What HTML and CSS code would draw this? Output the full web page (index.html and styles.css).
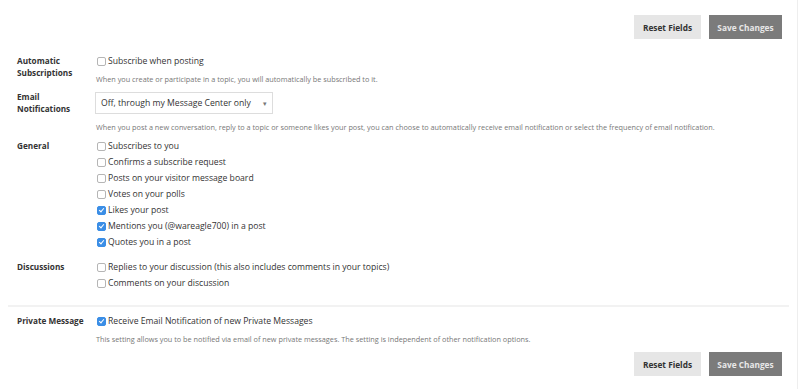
FILE: index.html
```html
<!DOCTYPE html>
<html lang="en">
<head>
    <meta charset="UTF-8">
    <title>Notification Settings</title>
    <link rel="stylesheet" href="styles.css">
</head>
<body>
<div class="page">
    <div class="actions top">
        <button type="button" class="button reset">Reset Fields</button>
        <button type="button" class="button save">Save Changes</button>
    </div>
    <form class="settings" autocomplete="off">
        <div class="row sec-auto">
            <span class="label">Automatic Subscriptions</span>
            <div class="fields">
                <label class="check"><input type="checkbox" name="autoSubscribe"> Subscribe when posting</label>
                <p class="desc">When you create or participate in a topic, you will automatically be subscribed to it.</p>
            </div>
        </div>
        <div class="row sec-email">
            <span class="label">Email Notifications</span>
            <div class="fields">
                <div class="select">
                    <span>Off, through my Message Center only</span>
                    <span class="caret">&#9662;</span>
                </div>
                <p class="desc">When you post a new conversation, reply to a topic or someone likes your post, you can choose to automatically receive email notification or select the frequency of email notification.</p>
            </div>
        </div>
        <div class="row sec-general">
            <span class="label">General</span>
            <div class="fields">
                <label class="check"><input type="checkbox"> Subscribes to you</label>
                <label class="check"><input type="checkbox"> Confirms a subscribe request</label>
                <label class="check"><input type="checkbox"> Posts on your visitor message board</label>
                <label class="check"><input type="checkbox"> Votes on your polls</label>
                <label class="check"><input type="checkbox" checked> Likes your post</label>
                <label class="check"><input type="checkbox" checked> Mentions you (@wareagle700) in a post</label>
                <label class="check"><input type="checkbox" checked> Quotes you in a post</label>
            </div>
        </div>
        <div class="row sec-disc">
            <span class="label">Discussions</span>
            <div class="fields">
                <label class="check"><input type="checkbox"> Replies to your discussion (this also includes comments in your topics)</label>
                <label class="check"><input type="checkbox"> Comments on your discussion</label>
            </div>
        </div>
        <div class="row sec-pm">
            <span class="label">Private Message</span>
            <div class="fields">
                <label class="check"><input type="checkbox" checked> Receive Email Notification of new Private Messages</label>
                <p class="desc">This setting allows you to be notified via email of new private messages. The setting is independent of other notification options.</p>
            </div>
        </div>
    </form>
    <div class="actions bottom">
        <button type="button" class="button reset">Reset Fields</button>
        <button type="button" class="button save">Save Changes</button>
    </div>
</div>
</body>
</html>
```

FILE: styles.css
```css
body {
    font-family: "Open Sans", "Liberation Sans", sans-serif;
    font-size: 8.65px;
    color: #333;
    margin: 0;
    background: #fff;
}
.page {
    width: 797px;
    height: 389px;
    border-right: 1px solid #eee;
    overflow: hidden;
}
.actions {
    display: flex;
    justify-content: flex-end;
    gap: 8px;
    padding-right: 15px;
}
.actions.top {
    padding-top: 15px;
}
.actions.bottom {
    padding-top: 7px;
}
.button {
    height: 24px;
    padding: 0;
    font-family: inherit;
    font-size: 8.3px;
    font-weight: bold;
    white-space: nowrap;
    border: 0;
    border-radius: 0;
    cursor: pointer;
}
.button.reset {
    width: 67px;
    background: #e6e6e6;
    color: #333;
}
.button.save {
    width: 73px;
    background: #7b7b7b;
    color: #e8e8e8;
}
.row {
    display: grid;
    grid-template-columns: 78px 1fr;
    padding-left: 17px;
}
.label {
    font-weight: bold;
    font-size: 8.2px;
    line-height: 12px;
    padding-top: 2px;
    padding-right: 8px;
    color: #333;
}
.check {
    display: flex;
    align-items: center;
    height: 16px;
    white-space: nowrap;
    color: #333;
}
.check input {
    appearance: none;
    width: 9px;
    height: 9px;
    margin: 0 2px 0 2px;
    border: 1px solid #b5b5b5;
    border-radius: 2px;
    background: #fff;
    position: relative;
    flex: none;
}
.check input:checked {
    background: #3b8ee6;
    border-color: #3b8ee6;
}
.check input:checked::after {
    content: "";
    position: absolute;
    left: 2px;
    top: 0;
    width: 2px;
    height: 4px;
    border: solid #fff;
    border-width: 0 1.5px 1.5px 0;
    transform: rotate(40deg);
}
.desc {
    margin: 4px 0 0 1px;
    font-size: 7.3px;
    line-height: 12px;
    color: #777;
    white-space: nowrap;
}
.sec-auto {
    padding-top: 14px;
}
.sec-email {
    padding-top: 6px;
}
.sec-email .label {
    padding-top: 0;
}
.select {
    display: flex;
    align-items: center;
    justify-content: space-between;
    width: 166px;
    height: 20px;
    margin-top: 1px;
    padding: 0 5px;
    border: 1px solid #ddd;
    font-size: 8.65px;
    color: #333;
}
.select .caret {
    font-size: 7px;
    color: #777;
}
.sec-email .desc {
    margin-top: 7px;
}
.sec-general {
    padding-top: 5px;
}
.sec-disc {
    padding-top: 9px;
}
.sec-pm {
    margin: 14px 8px 0 8px;
    padding-left: 9px;
    padding-top: 6px;
    border-top: 2px solid #f2f2f2;
}
```
